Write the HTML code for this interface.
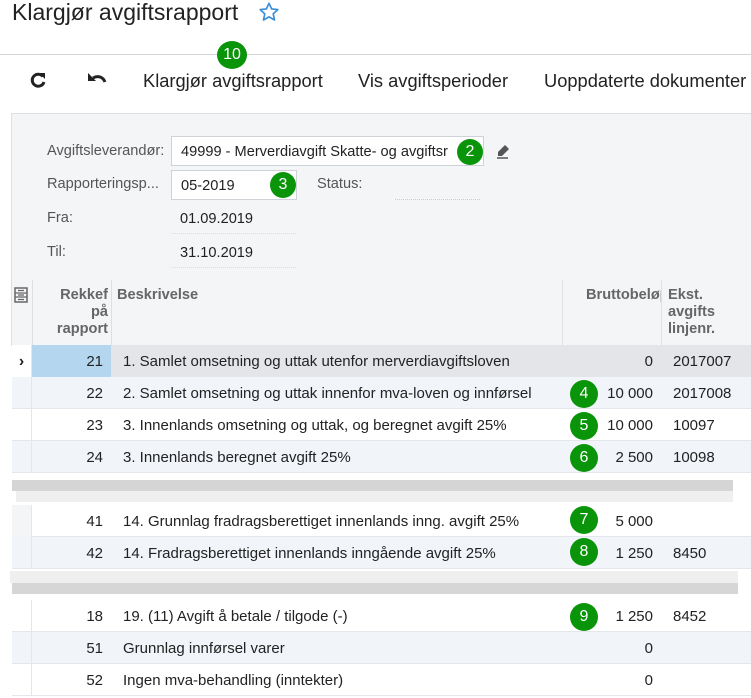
<!DOCTYPE html>
<html><head><meta charset="utf-8"><style>
*{margin:0;padding:0;box-sizing:border-box}
body{width:751px;height:697px;overflow:hidden;background:#fff;font-family:"Liberation Sans",Arial,sans-serif;color:#222;position:relative}
.a{position:absolute;white-space:nowrap}
.c{position:absolute;width:26px;height:26px;border-radius:50%;background:#0a940a;color:#fff;font-size:16px;line-height:26px;text-align:center}
.row{position:absolute;left:12px;width:739px;height:32px;border-bottom:1px solid #e3e6ea;font-size:15px}
.row div{position:absolute;top:0;height:32px;line-height:34px;white-space:nowrap}
.n{left:20px;width:79px;text-align:right;padding-right:8px}
.d{left:99px;width:451px;padding-left:12px}
.b{left:550px;width:99px;text-align:right;padding-right:8px}
.e{left:649px;width:90px;padding-left:12px}
.ind{left:0;width:20px;border-right:1px solid #e3e6ea}
.lbl{color:#555;font-size:14.6px}
</style></head><body>
<div class="a" style="left:12px;top:-1px;font-size:23px;color:#222">Klargjør avgiftsrapport</div>
<svg class="a" style="left:258px;top:1px" width="22" height="22" viewBox="0 0 24 24"><path d="M12 2.5l2.9 6.2 6.7.7-5 4.6 1.4 6.7L12 17.3l-6 3.4 1.4-6.7-5-4.6 6.7-.7z" fill="none" stroke="#3a8fd8" stroke-width="1.8" stroke-linejoin="round"/></svg>
<div class="a" style="left:0;top:54px;width:751px;height:1px;background:#d5d5d5"></div>
<svg class="a" style="left:28px;top:70px" width="20" height="20" viewBox="0 0 20 20"><path d="M15 6.5A6 6 0 1 0 16 12" fill="none" stroke="#222" stroke-width="3"/><path d="M11 3l6 0 0 6z" fill="#222"/></svg>
<svg class="a" style="left:86px;top:70px" width="22" height="18" viewBox="0 0 22 18"><path d="M7 8c5-3 10-1 12 4" fill="none" stroke="#222" stroke-width="3"/><path d="M2 3l0 8 8 0z" fill="#222"/></svg>
<div class="a" style="left:143px;top:70px;font-size:18.3px">Klargjør avgiftsrapport</div>
<div class="a" style="left:358px;top:70px;font-size:18.3px">Vis avgiftsperioder</div>
<div class="a" style="left:544px;top:70px;font-size:18.3px">Uoppdaterte dokumenter</div>
<div class="c" style="left:217px;top:41px;width:30px;height:28px;line-height:28px">10</div>

<div class="a" style="left:11px;top:113px;width:740px;height:168px;background:#f4f5f7;border:1px solid #dcdfe3;border-right:none"></div>
<div class="a lbl" style="left:47px;top:143px">Avgiftsleverandør:</div>
<div class="a" style="left:171px;top:136px;width:313px;height:30px;background:#fff;border:1px solid #cfd3d8;font-size:14.6px;line-height:30px;padding-left:9px;overflow:hidden">49999 - Merverdiavgift Skatte- og avgiftsr</div>
<div class="c" style="left:457px;top:139px">2</div>
<svg class="a" style="left:495px;top:143px" width="16" height="16" viewBox="0 0 16 16"><path d="M10 2l4 4-7 7H3V9z" fill="#555"/><path d="M2 15h11" stroke="#555" stroke-width="1.5"/></svg>
<div class="a lbl" style="left:47px;top:176px">Rapporteringsp...</div>
<div class="a" style="left:171px;top:170px;width:126px;height:30px;background:#fff;border:1px solid #cfd3d8;font-size:14.6px;line-height:30px;padding-left:9px">05-2019</div>
<div class="c" style="left:270px;top:172px">3</div>
<div class="a lbl" style="left:317px;top:176px">Status:</div>
<div class="a" style="left:395px;top:199px;width:85px;border-top:1px dotted #ccc"></div>
<div class="a lbl" style="left:47px;top:210px">Fra:</div>
<div class="a" style="left:180px;top:211px;font-size:14.6px">01.09.2019</div>
<div class="a" style="left:171px;top:233px;width:125px;border-top:1px dotted #ddd"></div>
<div class="a lbl" style="left:47px;top:244px">Til:</div>
<div class="a" style="left:180px;top:245px;font-size:14.6px">31.10.2019</div>
<div class="a" style="left:171px;top:267px;width:125px;border-top:1px dotted #ddd"></div>

<div class="a" style="left:11px;top:280px;width:740px;height:66px;background:#f4f5f7;border-bottom:1px solid #dcdfe3;border-left:1px solid #dcdfe3"></div>
<div class="a" style="left:32px;top:280px;width:1px;height:66px;background:#dcdfe3"></div>
<div class="a" style="left:111px;top:280px;width:1px;height:66px;background:#dcdfe3"></div>
<div class="a" style="left:562px;top:280px;width:1px;height:66px;background:#dcdfe3"></div>
<div class="a" style="left:661px;top:280px;width:1px;height:66px;background:#dcdfe3"></div>
<svg class="a" style="left:14px;top:287px" width="14" height="16" viewBox="0 0 14 16"><rect x="1" y="1" width="12" height="14" fill="none" stroke="#666" stroke-width="1.5"/><path d="M1 6h12M1 10h12M4 3.5h6M4 8h6M4 12.5h6" stroke="#666" stroke-width="1.2"/></svg>
<div class="a" style="left:34px;top:287px;width:74px;font-size:14.6px;font-weight:bold;color:#666;text-align:right;line-height:17px;overflow:hidden">Rekkef<br>på<br>rapport</div>
<div class="a" style="left:117px;top:287px;font-size:14.6px;font-weight:bold;color:#666">Beskrivelse</div>
<div class="a" style="left:586px;top:287px;width:75px;font-size:14.6px;font-weight:bold;color:#666;overflow:hidden">Bruttobeløp</div>
<div class="a" style="left:668px;top:287px;font-size:14.6px;font-weight:bold;color:#666;line-height:17px">Ekst.<br>avgifts<br>linjenr.</div>

<div class="row" style="top:345px;background:#e3e5e8"><div class="ind" style="background:#fff;font-weight:bold;text-align:center;font-size:16px">›</div><div class="n" style="background:#b4d6ef">21</div><div class="d">1. Samlet omsetning og uttak utenfor merverdiavgiftsloven</div><div class="b">0</div><div class="e">2017007</div></div>
<div class="row" style="top:377px;background:#f1f4f9"><div class="ind"></div><div class="n">22</div><div class="d">2. Samlet omsetning og uttak innenfor mva-loven og innførsel</div><div class="b">10 000</div><div class="e">2017008</div></div>
<div class="row" style="top:409px;background:#fff"><div class="ind"></div><div class="n">23</div><div class="d">3. Innenlands omsetning og uttak, og beregnet avgift 25%</div><div class="b">10 000</div><div class="e">10097</div></div>
<div class="row" style="top:441px;background:#f1f4f9"><div class="ind"></div><div class="n">24</div><div class="d">3. Innenlands beregnet avgift 25%</div><div class="b">2 500</div><div class="e">10098</div></div>

<div class="a" style="left:12px;top:480px;width:721px;height:11px;background:#d5d5d5"></div>
<div class="a" style="left:16px;top:491px;width:717px;height:11px;background:#efefef"></div>

<div class="row" style="top:505px;background:#fff"><div class="ind" style="background:#f4f5f7"></div><div class="n">41</div><div class="d">14. Grunnlag fradragsberettiget innenlands inng. avgift 25%</div><div class="b">5 000</div><div class="e"></div></div>
<div class="row" style="top:537px;background:#f1f4f9"><div class="ind"></div><div class="n">42</div><div class="d">14. Fradragsberettiget innenlands inngående avgift 25%</div><div class="b">1 250</div><div class="e">8450</div></div>

<div class="a" style="left:10px;top:571px;width:728px;height:12px;background:#efefef"></div>
<div class="a" style="left:12px;top:583px;width:726px;height:11px;background:#d6d6d6"></div>

<div class="row" style="top:600px;background:#fff"><div class="ind"></div><div class="n">18</div><div class="d">19. (11) Avgift å betale / tilgode (-)</div><div class="b">1 250</div><div class="e">8452</div></div>
<div class="row" style="top:632px;background:#f1f4f9"><div class="ind"></div><div class="n">51</div><div class="d">Grunnlag innførsel varer</div><div class="b">0</div><div class="e"></div></div>
<div class="row" style="top:664px;background:#fff"><div class="ind"></div><div class="n">52</div><div class="d">Ingen mva-behandling (inntekter)</div><div class="b">0</div><div class="e"></div></div>

<div class="c" style="left:570px;top:380px;width:28px;height:28px;line-height:28px">4</div>
<div class="c" style="left:570px;top:412px;width:28px;height:28px;line-height:28px">5</div>
<div class="c" style="left:570px;top:444px;width:28px;height:28px;line-height:28px">6</div>
<div class="c" style="left:570px;top:506px;width:28px;height:28px;line-height:28px">7</div>
<div class="c" style="left:570px;top:538px;width:28px;height:28px;line-height:28px">8</div>
<div class="c" style="left:570px;top:603px;width:28px;height:28px;line-height:28px">9</div>
</body></html>
